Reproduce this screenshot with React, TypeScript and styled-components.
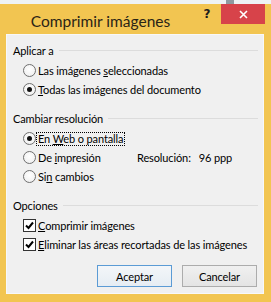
import * as React from "react";
import styled, { createGlobalStyle } from "styled-components";

const GlobalStyle = createGlobalStyle`
    body {
        margin: 0;
        background-color: #e8eff3;
        font-family: Lato, "Noto Sans", sans-serif;
        font-size: 11px;
        letter-spacing: -0.12px;
        color: #000;
    }
`;

const App: React.FC = () => {
    return (
        <>
            <GlobalStyle />
            <DesktopStrip>
                <Smudge />
            </DesktopStrip>
            <Window>
                <TitleBar>
                    <Title>Comprimir imágenes</Title>
                    <HelpButton>?</HelpButton>
                    <CloseButton>
                        <svg width="9" height="9" viewBox="0 0 9 9">
                            <path d="M1 1 L8 8 M8 1 L1 8" stroke="#fff" strokeWidth="1.6" />
                        </svg>
                    </CloseButton>
                </TitleBar>
                <Client>
                    <Group>
                        <GroupHeader>
                            <span>Aplicar a</span>
                            <Rule />
                        </GroupHeader>
                        <OptionRow>
                            <Radio />
                            <Label>
                                Las imágenes <Key>s</Key>eleccionadas
                            </Label>
                        </OptionRow>
                        <OptionRow>
                            <Radio $checked />
                            <Label>
                                <Key>T</Key>odas las imágenes del documento
                            </Label>
                        </OptionRow>
                    </Group>
                    <Group>
                        <GroupHeader>
                            <span>Cambiar resolución</span>
                            <Rule />
                        </GroupHeader>
                        <OptionRow>
                            <Radio $checked />
                            <Label $focused>
                                En <Key>W</Key>eb o pantalla
                            </Label>
                        </OptionRow>
                        <OptionRow>
                            <OptionCell>
                                <Radio />
                                <Label>
                                    De <Key>i</Key>mpresión
                                </Label>
                            </OptionCell>
                            <Resolution>
                                <span>Resolución:</span>
                                <span>96 ppp</span>
                            </Resolution>
                        </OptionRow>
                        <OptionRow>
                            <Radio />
                            <Label>
                                Si<Key>n</Key> cambios
                            </Label>
                        </OptionRow>
                    </Group>
                    <Group>
                        <GroupHeader>
                            <span>Opciones</span>
                            <Rule />
                        </GroupHeader>
                        <OptionRow>
                            <Check />
                            <Label>
                                <Key>C</Key>omprimir imágenes
                            </Label>
                        </OptionRow>
                        <OptionRow>
                            <Check />
                            <Label>
                                <Key>E</Key>liminar las áreas recortadas de las imágenes
                            </Label>
                        </OptionRow>
                    </Group>
                    <ButtonBar>
                        <DialogButton $primary>Aceptar</DialogButton>
                        <DialogButton>Cancelar</DialogButton>
                    </ButtonBar>
                </Client>
            </Window>
        </>
    );
};

export default App;

const Check: React.FC = () => (
    <CheckBox>
        <svg width="11" height="11" viewBox="0 0 11 11">
            <path d="M2 5.5 L4.5 8 L9 2.5" fill="none" stroke="#000" strokeWidth="2" />
        </svg>
    </CheckBox>
);

const DesktopStrip = styled.div`
    height: 4px;
    background-color: #eef3f5;
    position: relative;
`;

const Smudge = styled.div`
    position: absolute;
    left: 226px;
    top: 0;
    width: 8px;
    height: 4px;
    background-color: #8e9aa0;
`;

const Window = styled.div`
    width: 271px;
    height: 298px;
    box-sizing: border-box;
    background-color: #f2c551;
    padding: 0 7px 8px 6px;
    display: flex;
    flex-direction: column;
`;

const TitleBar = styled.div`
    height: 30px;
    display: flex;
    align-items: flex-start;
    margin-right: -1px;
`;

const Title = styled.div`
    flex: 1;
    text-align: center;
    font-size: 15.5px;
    letter-spacing: 0;
    line-height: 30px;
    padding-top: 2px;
    color: #2a2416;
    padding-left: 2px;
`;

const HelpButton = styled.div`
    width: 28px;
    height: 20px;
    font-family: "DejaVu Sans", sans-serif;
    font-weight: bold;
    font-size: 12px;
    line-height: 20px;
    text-align: center;
    color: #1c1c1c;
`;

const CloseButton = styled.div`
    width: 44px;
    height: 20px;
    background-color: #d7434a;
    display: flex;
    align-items: center;
    justify-content: center;
`;

const Client = styled.div`
    flex: 1;
    background-color: #f0f0f0;
    border: 1px solid #f8f8f8;
    padding: 7px 5px 6px 6px;
    display: flex;
    flex-direction: column;
    gap: 11px;
`;

const Group = styled.div`
    display: flex;
    flex-direction: column;
`;

const GroupHeader = styled.div`
    height: 16px;
    margin-bottom: 3px;
    display: flex;
    align-items: center;
    gap: 5px;
`;

const Rule = styled.div`
    flex: 1;
    height: 1px;
    background-color: #dcdcdc;
`;

const OptionRow = styled.div`
    height: 19px;
    display: flex;
    align-items: center;
    padding-left: 10px;
`;

const OptionCell = styled.div`
    width: 114px;
    display: flex;
    align-items: center;
`;

const Radio = styled.span<{ $checked?: boolean }>`
    width: 11px;
    height: 11px;
    border-radius: 50%;
    border: 1px solid #6f6f6f;
    background: radial-gradient(circle at 50% 40%, #ffffff, #ececec);
    display: flex;
    align-items: center;
    justify-content: center;
    flex-shrink: 0;
    &::after {
        content: "";
        width: 5px;
        height: 5px;
        border-radius: 50%;
        background-color: #111;
        display: ${(props) => (props.$checked ? "block" : "none")};
    }
`;

const CheckBox = styled.span`
    width: 11px;
    height: 11px;
    border: 1px solid #333;
    background-color: #fff;
    display: flex;
    align-items: center;
    justify-content: center;
    flex-shrink: 0;
`;

const Label = styled.span<{ $focused?: boolean }>`
    margin-left: 0;
    padding: 0 1px;
    line-height: 12px;
    border: 1px dotted ${(props) => (props.$focused ? "#000" : "transparent")};
    white-space: nowrap;
`;

const Key = styled.span`
    text-decoration: underline;
    text-underline-offset: 1px;
`;

const Resolution = styled.div`
    display: flex;
    gap: 8px;
`;

const ButtonBar = styled.div`
    display: flex;
    justify-content: flex-end;
    gap: 10px;
    padding-right: 1px;
`;

const DialogButton = styled.button<{ $primary?: boolean }>`
    width: 75px;
    height: 22px;
    font-family: inherit;
    font-size: 11px;
    letter-spacing: inherit;
    color: #000;
    border: 1px solid ${(props) => (props.$primary ? "#5b9bd5" : "#acacac")};
    background: ${(props) =>
        props.$primary
            ? "linear-gradient(#f3f6f9, #e6edf3)"
            : "linear-gradient(#f0f0f0, #e4e4e4)"};
    padding: 0;
`;
